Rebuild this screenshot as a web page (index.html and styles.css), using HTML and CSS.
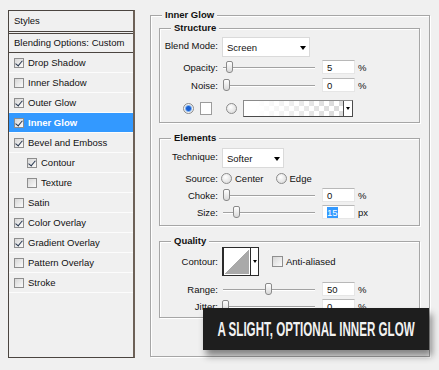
FILE: index.html
```html
<!DOCTYPE html>
<html lang="en">
<head>
    <meta charset="UTF-8">
    <title>Layer Style - Inner Glow</title>
    <link rel="stylesheet" href="styles.css">
</head>
<body>
    <div class="dialog">
        <div class="styles-panel">
            <div class="panel-head">Styles</div>
            <div class="panel-blend">Blending Options: Custom</div>
            <ul class="fx-list">
                <li><span class="cb on"></span>Drop Shadow</li>
                <li><span class="cb"></span>Inner Shadow</li>
                <li><span class="cb on"></span>Outer Glow</li>
                <li class="active"><span class="cb on"></span>Inner Glow</li>
                <li><span class="cb on"></span>Bevel and Emboss</li>
                <li class="sub"><span class="cb on"></span>Contour</li>
                <li class="sub"><span class="cb"></span>Texture</li>
                <li><span class="cb"></span>Satin</li>
                <li><span class="cb on"></span>Color Overlay</li>
                <li><span class="cb on"></span>Gradient Overlay</li>
                <li><span class="cb"></span>Pattern Overlay</li>
                <li><span class="cb"></span>Stroke</li>
            </ul>
        </div>

        <fieldset class="group outer">
            <legend>Inner Glow</legend>

            <fieldset class="group structure">
                <legend>Structure</legend>
                <div class="row tall">
                    <span class="lbl top">Blend Mode:</span>
                    <div class="select blend">Screen<span class="caret"></span></div>
                </div>
                <div class="row">
                    <span class="lbl">Opacity:</span>
                    <div class="slider"><span class="thumb" style="left: 6.5%"></span></div>
                    <div class="num">5</div>
                    <span class="unit">%</span>
                </div>
                <div class="row gap4">
                    <span class="lbl">Noise:</span>
                    <div class="slider"><span class="thumb" style="left: 3.3%"></span></div>
                    <div class="num">0</div>
                    <span class="unit">%</span>
                </div>
                <div class="colors">
                    <span class="radio on"></span>
                    <span class="swatch"></span>
                    <span class="radio second"></span>
                    <div class="gradient">
                        <span class="grad-fill"></span>
                        <span class="grad-drop"><span class="caret small"></span></span>
                    </div>
                </div>
            </fieldset>

            <fieldset class="group elements">
                <legend>Elements</legend>
                <div class="row tall first">
                    <span class="lbl top">Technique:</span>
                    <div class="select technique">Softer<span class="caret"></span></div>
                </div>
                <div class="row">
                    <span class="lbl">Source:</span>
                    <div class="opts">
                        <span class="radio"></span><span class="opt">Center</span>
                        <span class="radio second"></span><span class="opt">Edge</span>
                    </div>
                </div>
                <div class="row">
                    <span class="lbl">Choke:</span>
                    <div class="slider"><span class="thumb" style="left: 3.3%"></span></div>
                    <div class="num">0</div>
                    <span class="unit">%</span>
                </div>
                <div class="row">
                    <span class="lbl">Size:</span>
                    <div class="slider"><span class="thumb" style="left: 14%"></span></div>
                    <div class="num"><span class="hl">15</span></div>
                    <span class="unit">px</span>
                </div>
            </fieldset>

            <fieldset class="group quality">
                <legend>Quality</legend>
                <div class="row contour-row">
                    <span class="lbl">Contour:</span>
                    <div class="opts">
                        <div class="contour">
                            <span class="preview"></span>
                            <span class="drop"><span class="caret small"></span></span>
                        </div>
                        <span class="cb plain"></span><span class="opt">Anti-aliased</span>
                    </div>
                </div>
                <div class="row range">
                    <span class="lbl">Range:</span>
                    <div class="slider"><span class="thumb" style="left: 49%"></span></div>
                    <div class="num">50</div>
                    <span class="unit">%</span>
                </div>
                <div class="row">
                    <span class="lbl">Jitter:</span>
                    <div class="slider"><span class="thumb" style="left: 2%"></span></div>
                    <div class="num">0</div>
                    <span class="unit">%</span>
                </div>
            </fieldset>
        </fieldset>

        <div class="banner"><span>A SLIGHT, OPTIONAL INNER GLOW</span></div>
    </div>
</body>
</html>
```

FILE: styles.css
```css
* {
    box-sizing: border-box;
}
body {
    margin: 0;
    background-color: #f0f0f0;
    font-family: "Liberation Sans", Arial, sans-serif;
    font-size: 9.5px;
    color: #111;
}
.dialog {
    position: relative;
    display: flex;
    align-items: flex-start;
    gap: 15px;
    height: 370px;
    padding: 9px 0 0 8px;
}

/* left styles list */
.styles-panel {
    width: 127px;
    height: 348px;
    margin-top: 1px;
    border: 1px solid #4b4540;
    border-right: 2px solid #6d6157;
}
.panel-head {
    height: 21px;
    line-height: 20px;
    padding-left: 5px;
    border-bottom: 1px solid #4b4540;
}
.panel-blend {
    height: 20px;
    margin-top: 1px;
    line-height: 18px;
    padding-left: 5px;
    border-top: 1px solid #4b4540;
    border-bottom: 1px solid #4b4540;
}
.fx-list {
    margin: 0;
    padding: 0;
    list-style: none;
}
.fx-list li {
    display: flex;
    align-items: center;
    height: 20px;
    padding-left: 5px;
    border-bottom: 1px solid #fcfcfc;
}
.fx-list li.sub { padding-left: 18px; }
.fx-list li.active {
    background-color: #3399ff;
    color: #fff;
    font-weight: bold;
}
.cb {
    position: relative;
    width: 10px;
    height: 10px;
    margin-right: 4px;
    border: 1px solid #8e8e8e;
    background: linear-gradient(135deg, #d6d6d6, #fbfbfb);
}
.cb.on::after {
    content: "";
    position: absolute;
    left: 2px;
    top: 0;
    width: 3px;
    height: 6px;
    border: solid #26364f;
    border-width: 0 1.5px 1.5px 0;
    transform: rotate(40deg);
}

/* group boxes */
.group {
    margin: 9px 0 0;
    padding: 0 0 5px;
    min-width: 0;
    border: 1px solid #a6a6a6;
    box-shadow: 1px 1px 0 #fff, inset 1px 1px 0 #fff;
}
.group legend {
    margin-left: 11px;
    padding: 0 3px;
    line-height: 12px;
    font-weight: bold;
    background-color: #f0f0f0;
}
.outer {
    width: 280px;
    margin: 0;
    padding: 0 9px 38px 8px;
}
.outer > legend { margin-left: 3px; }
.structure { margin-top: 1px; }
.elements { padding-bottom: 6px; }
.quality { padding-bottom: 4px; }

.row {
    display: grid;
    grid-template-columns: 58px 96px 33px auto;
    column-gap: 4px;
    align-items: center;
    height: 14px;
    margin-top: 3px;
}
.row.gap4 { margin-top: 4px; }
.row.tall { height: 20px; }
.row.first { margin-top: 4px; }
.row.contour-row { height: 29px; margin-top: 0; }
.row.range { margin-top: 6px; }
.lbl {
    text-align: right;
    white-space: nowrap;
}
.lbl.top {
    align-self: start;
    padding-top: 3px;
}

.select {
    grid-column: 2 / span 3;
    display: flex;
    align-items: center;
    justify-content: space-between;
    height: 20px;
    padding: 1px 3px 0 4px;
    background-color: #fff;
    border: 1px solid #dadada;
}
.select.blend { width: 88px; }
.select.technique { width: 62px; }
.caret {
    width: 0;
    height: 0;
    border-left: 3.5px solid transparent;
    border-right: 3.5px solid transparent;
    border-top: 4px solid #000;
}
.caret.small {
    border-left-width: 2.5px;
    border-right-width: 2.5px;
    border-top-width: 3px;
}

.slider {
    position: relative;
    height: 14px;
    margin: 0 3px 0 1px;
}
.slider::before {
    content: "";
    position: absolute;
    left: 0;
    right: 0;
    top: 7px;
    height: 1px;
    background-color: #a2a2a2;
    box-shadow: 0 1px 0 #fff;
}
.thumb {
    position: absolute;
    top: 1px;
    width: 7px;
    height: 12px;
    margin-left: -3px;
    border: 1px solid #8a8a8a;
    border-radius: 2px 2px 3px 3px;
    background: linear-gradient(#fff, #d9d9d9);
}
.num {
    height: 14px;
    padding-left: 4px;
    line-height: 13px;
    background-color: #fff;
    border: 1px solid #e6e6e6;
    border-top-color: #b8b8b8;
}
.hl {
    background-color: #3399ff;
    color: #fff;
}
.unit { margin-left: -1px; }

.radio {
    width: 11px;
    height: 11px;
    border-radius: 50%;
    border: 1px solid #8c8c8c;
    background: radial-gradient(circle at 40% 35%, #fff, #d4d4d4);
}
.radio.on {
    background: radial-gradient(circle, #1a5fd0 0 2px, #7fb0ee 3px, #f4f4f4 4px, #d6d6d6 100%);
}
.colors {
    display: flex;
    align-items: center;
    height: 17px;
    margin-top: 8px;
    padding-left: 23px;
}
.swatch {
    width: 12px;
    height: 13px;
    margin-left: 6px;
    background-color: #fff;
    border: 1px solid #9c9c9c;
}
.colors .radio.second { margin-left: 14px; }
.gradient {
    display: flex;
    width: 110px;
    height: 17px;
    margin-left: 6px;
    border: 1px solid #4a4a4a;
    border-top-color: #8a8a8a;
    border-left-color: #8a8a8a;
}
.grad-fill {
    flex: 1;
    background:
        linear-gradient(to right, #fff 12%, rgba(255, 255, 255, 0) 90%),
        conic-gradient(#dcdcdc 25%, #fff 0 50%, #dcdcdc 0 75%, #fff 0) 0 0 / 10px 10px;
}
.grad-drop {
    display: flex;
    align-items: center;
    justify-content: center;
    width: 9px;
    background-color: #fff;
    border-left: 1px solid #4a4a4a;
}

.opts {
    grid-column: 2 / span 3;
    display: flex;
    align-items: center;
}
.opts > .radio:first-child { margin-left: -1px; }
.opts .radio.second { margin-left: 12px; }
.opt { margin-left: 3px; }

.contour {
    display: flex;
    width: 37px;
    height: 29px;
    border: 1px solid #2b2b2b;
    border-left-width: 2px;
    background-color: #fff;
}
.contour .preview {
    flex: 1;
    margin: 1px;
    background: linear-gradient(to bottom right, #fff 50%, #a9a9a9 50%);
}
.contour .drop {
    display: flex;
    align-items: center;
    justify-content: center;
    width: 8px;
    border-left: 1px solid #2b2b2b;
}
.cb.plain {
    width: 11px;
    height: 11px;
    margin: 0 0 0 13px;
}

/* caption over the screenshot */
.banner {
    position: absolute;
    left: 203px;
    top: 308px;
    width: 226px;
    height: 42px;
    display: flex;
    align-items: center;
    justify-content: center;
    background-color: #1e1e1e;
    box-shadow: 3px 6px 7px rgba(0, 0, 0, 0.45);
}
.banner span {
    color: #f2f2f2;
    font-family: "Liberation Sans", Arial, sans-serif;
    font-size: 20px;
    font-weight: bold;
    white-space: nowrap;
    transform: scaleX(0.58);
}
```
